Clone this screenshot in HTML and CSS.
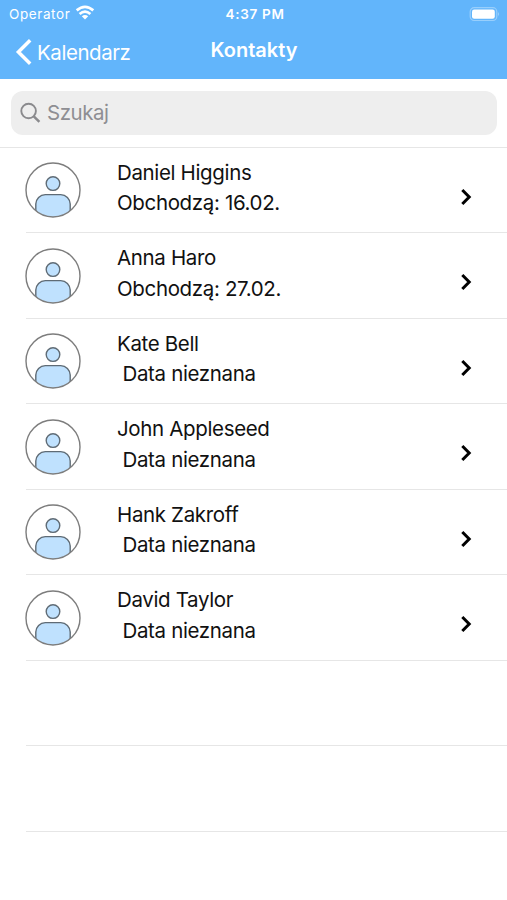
FILE: index.html
```
<!DOCTYPE html>
<html lang="pl">
<head>
<meta charset="UTF-8">
<meta name="viewport" content="width=device-width, initial-scale=1.0">
<title>Kontakty</title>
<link rel="stylesheet" href="styles.css">
</head>
<body>

<svg width="0" height="0" class="symbols">
  <symbol id="avatar" viewBox="0 0 56 56">
    <clipPath id="avatarClip"><circle cx="28" cy="28" r="27"/></clipPath>
    <circle cx="28" cy="28" r="27" fill="#fff"/>
    <g fill="#bfe1fe" stroke="#5f6b75" stroke-width="1.4" clip-path="url(#avatarClip)">
      <circle cx="28" cy="21.6" r="6.8"/>
      <rect x="10.8" y="32.6" width="34.4" height="34" rx="9.5"/>
    </g>
    <circle cx="28" cy="28" r="27" fill="none" stroke="#7d7d7d" stroke-width="1.4"/>
  </symbol>
  <symbol id="chevron" viewBox="0 0 12 18">
    <path d="M2.3 2 L9.2 9 L2.3 16" fill="none" stroke="#000" stroke-width="3"/>
  </symbol>
</svg>

<header class="header">
  <div class="status">
    <div class="operator">
      <span>Operator</span>
      <svg class="wifi" width="20" height="15" viewBox="0 0 20 15">
        <path d="M1.7 5.4 Q10 -1.7 18.3 5.4" fill="none" stroke="#fff" stroke-width="2.7"/>
        <path d="M4.6 9 Q10 4.2 15.4 9" fill="none" stroke="#fff" stroke-width="2.7"/>
        <path d="M10 14.4 L6.8 11.3 Q10 8.6 13.2 11.3 Z" fill="#fff"/>
      </svg>
    </div>
    <span class="time">4:37 PM</span>
    <svg class="battery" width="32" height="16" viewBox="0 0 32 16">
      <rect x="1.2" y="1.7" width="26.6" height="12.8" rx="4" fill="none" stroke="#fff" stroke-opacity="0.35" stroke-width="1.2"/>
      <rect x="3" y="3.5" width="22.8" height="9.2" rx="2.2" fill="#fff"/>
      <path d="M29.3 5.8 Q31 8.1 29.3 10.4 Z" fill="#fff" fill-opacity="0.5"/>
    </svg>
  </div>
  <nav class="nav">
    <a href="#" class="back">
      <svg width="17" height="28" viewBox="0 0 17 28">
        <path d="M15.2 2.2 L3.4 14 L15.2 25.8" fill="none" stroke="#fff" stroke-width="3.5"/>
      </svg>
      <span>Kalendarz</span>
    </a>
    <h1 class="title">Kontakty</h1>
    <span></span>
  </nav>
</header>

<div class="search">
  <label class="search-box">
    <svg width="22" height="22" viewBox="0 0 22 22">
      <circle cx="8.6" cy="9" r="7.3" fill="none" stroke="#8a8a8d" stroke-width="1.9"/>
      <path d="M13.8 14.3 L19.4 19.8" stroke="#8a8a8d" stroke-width="2.5"/>
    </svg>
    <input type="text" class="search-input" placeholder="Szukaj">
  </label>
</div>

<ul class="contacts">
  <li class="contact">
    <svg class="avatar"><use href="#avatar"/></svg>
    <div class="info">
      <div class="name">Daniel Higgins</div>
      <div class="date">Obchodzą: 16.02.</div>
    </div>
    <svg class="chevron"><use href="#chevron"/></svg>
  </li>
  <li class="contact">
    <svg class="avatar"><use href="#avatar"/></svg>
    <div class="info">
      <div class="name">Anna Haro</div>
      <div class="date">Obchodzą: 27.02.</div>
    </div>
    <svg class="chevron"><use href="#chevron"/></svg>
  </li>
  <li class="contact">
    <svg class="avatar"><use href="#avatar"/></svg>
    <div class="info">
      <div class="name">Kate Bell</div>
      <div class="date unknown">Data nieznana</div>
    </div>
    <svg class="chevron"><use href="#chevron"/></svg>
  </li>
  <li class="contact">
    <svg class="avatar"><use href="#avatar"/></svg>
    <div class="info">
      <div class="name">John Appleseed</div>
      <div class="date unknown">Data nieznana</div>
    </div>
    <svg class="chevron"><use href="#chevron"/></svg>
  </li>
  <li class="contact">
    <svg class="avatar"><use href="#avatar"/></svg>
    <div class="info">
      <div class="name">Hank Zakroff</div>
      <div class="date unknown">Data nieznana</div>
    </div>
    <svg class="chevron"><use href="#chevron"/></svg>
  </li>
  <li class="contact">
    <svg class="avatar"><use href="#avatar"/></svg>
    <div class="info">
      <div class="name">David Taylor</div>
      <div class="date unknown">Data nieznana</div>
    </div>
    <svg class="chevron"><use href="#chevron"/></svg>
  </li>
  <li class="contact"></li>
  <li class="contact"></li>
</ul>

</body>
</html>
```
FILE: styles.css
```
* {
  box-sizing: border-box;
}
body {
  margin: 0;
  height: 900px;
  overflow: hidden;
  background-color: #fff;
  color: #111;
  font-family: Inter, "Liberation Sans", sans-serif;
}
svg {
  display: block;
  flex: none;
}
.symbols {
  position: absolute;
}
.header {
  height: 79px;
  background-color: #62b5fb;
  color: #fff;
}
.status {
  display: grid;
  grid-template-columns: 1fr auto 1fr;
  align-items: center;
  height: 27px;
  padding: 0 6px 0 9px;
  font-size: 13.5px;
}
.operator {
  display: flex;
  align-items: center;
  gap: 5px;
  letter-spacing: 0.6px;
}
.wifi {
  margin-bottom: 2px;
}
.time {
  font-weight: 600;
  letter-spacing: 0.7px;
}
.battery {
  justify-self: end;
}
.nav {
  display: grid;
  grid-template-columns: 1fr auto 1fr;
  align-items: center;
  height: 52px;
  padding: 0 14px 0 15px;
}
.back {
  display: flex;
  align-items: center;
  gap: 5px;
  margin-bottom: 2px;
  color: #fff;
  font-size: 20.5px;
  letter-spacing: -0.45px;
  text-decoration: none;
}
.title {
  margin: 0 0 6px;
  font-size: 20px;
  font-weight: 600;
}
.search {
  height: 69px;
  padding: 12px 10px 0 11px;
  border-bottom: 1px solid #e6e6e6;
}
.search-box {
  display: flex;
  align-items: center;
  gap: 5px;
  height: 44px;
  padding: 0 9px 1px;
  border-radius: 12px;
  background-color: #eee;
}
.search-input {
  width: 100%;
  padding: 0 0 1px;
  border: none;
  outline: none;
  background: none;
  font-family: inherit;
  font-size: 20.5px;
  letter-spacing: -0.45px;
}
.search-input::placeholder {
  color: #8e8e93;
}
.contacts {
  margin: -0.3px 0 0;
  padding: 0 0 0 26px;
  list-style: none;
}
.contact {
  display: flex;
  height: 85.5px;
  border-bottom: 1px solid #e6e6e6;
}
.avatar {
  width: 56px;
  height: 56px;
  margin: 14.5px 0 0 -1px;
}
.info {
  flex: 1;
  padding: 10px 0 0 36px;
  font-size: 20.5px;
  line-height: 30.5px;
  letter-spacing: -0.35px;
}
.unknown {
  padding-left: 5.5px;
}
.chevron {
  width: 12px;
  height: 18px;
  margin: 40px 35px 0 0;
}
```
